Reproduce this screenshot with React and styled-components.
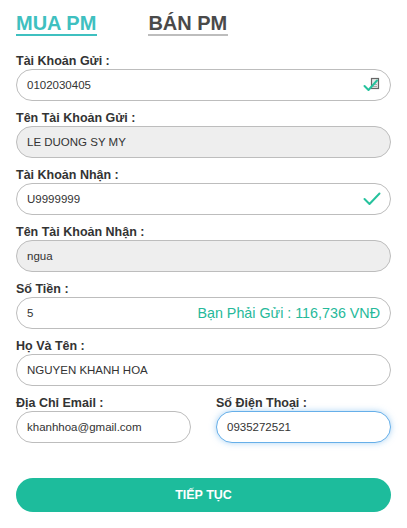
import React from 'react';
import styled, { createGlobalStyle } from 'styled-components';

const GlobalStyle = createGlobalStyle`
  body {
    margin: 0;
    background: #fff;
    font-family: "Liberation Sans", Arial, sans-serif;
  }
`;

const Page = styled.div`
  width: 407px;
  box-sizing: border-box;
  padding: 12px 16px 0;
`;

const Tabs = styled.div`
  display: flex;
  gap: 51px;
`;

const Tab = styled.div`
  font-size: 20px;
  line-height: 22px;
  font-weight: bold;
  color: ${({ active }) => (active ? '#3fc0c0' : '#4a4a4a')};
  border-bottom: 2px solid ${({ active }) => (active ? '#3fc0c0' : '#bdbdbd')};
  padding: 0 1px 0 0;
`;

const Form = styled.form`
  margin-top: 18px;
  display: flex;
  flex-direction: column;
  gap: 10px;
`;

const Row = styled.div`
  display: grid;
  grid-template-columns: 1fr 1fr;
  column-gap: 25px;
`;

const Field = styled.div`
  display: flex;
  flex-direction: column;
`;

const Label = styled.label`
  font-size: 12.5px;
  line-height: 15px;
  font-weight: bold;
  color: #333;
`;

const InputWrap = styled.div`
  position: relative;
  height: 32px;
  box-sizing: border-box;
  border: 1px solid ${({ focused }) => (focused ? '#66afe9' : '#bdbdbd')};
  border-radius: 16px;
  background: ${({ readOnly }) => (readOnly ? '#eeeeee' : '#fff')};
  box-shadow: ${({ focused }) => (focused ? '0 0 6px rgba(102, 175, 233, 0.55)' : 'none')};
  display: flex;
  align-items: center;
  padding: 0 10px 0 10px;
`;

const Value = styled.span`
  flex: 1;
  font-size: 11.5px;
  color: #333;
  white-space: nowrap;
`;

const Hint = styled.span`
  font-size: 14.3px;
  color: #26b99a;
  white-space: nowrap;
`;

const Icon = styled.span`
  display: flex;
  align-items: center;
  margin-right: -1px;
`;

const Button = styled.button`
  margin-top: 25px;
  height: 34px;
  border: 0;
  border-radius: 17px;
  background: #1dbc9c;
  color: #fff;
  font-family: "Liberation Sans", Arial, sans-serif;
  font-size: 12.5px;
  font-weight: bold;
  cursor: pointer;
`;

const CheckDoc = () => (
  <svg width="18" height="16" viewBox="0 0 18 16">
    <rect x="8.5" y="1.5" width="7" height="10" fill="#e8e8e8" stroke="#666" strokeWidth="1.2" />
    <path d="M10 7.5h4M10 9.5h4" stroke="#999" strokeWidth="0.8" />
    <path d="M1.5 9 L5.5 13 L14 3.5" fill="none" stroke="#26c29d" strokeWidth="2" strokeLinecap="round" strokeLinejoin="round" />
  </svg>
);

const Check = () => (
  <svg width="18" height="14" viewBox="0 0 18 14">
    <path d="M1.5 7 L6.5 12 L16.5 1.5" fill="none" stroke="#26c29d" strokeWidth="2" strokeLinecap="round" strokeLinejoin="round" />
  </svg>
);

const App = () => {
  return (
    <Page>
      <GlobalStyle />
      <Tabs>
        <Tab active>MUA PM</Tab>
        <Tab>BÁN PM</Tab>
      </Tabs>
      <Form onSubmit={(e) => e.preventDefault()}>
        <Field>
          <Label>Tài Khoản Gửi :</Label>
          <InputWrap>
            <Value>0102030405</Value>
            <Icon><CheckDoc /></Icon>
          </InputWrap>
        </Field>
        <Field>
          <Label>Tên Tài Khoản Gửi :</Label>
          <InputWrap readOnly>
            <Value>LE DUONG SY MY</Value>
          </InputWrap>
        </Field>
        <Field>
          <Label>Tài Khoản Nhận :</Label>
          <InputWrap>
            <Value>U9999999</Value>
            <Icon><Check /></Icon>
          </InputWrap>
        </Field>
        <Field>
          <Label>Tên Tài Khoản Nhận :</Label>
          <InputWrap readOnly>
            <Value>ngua</Value>
          </InputWrap>
        </Field>
        <Field>
          <Label>Số Tiền :</Label>
          <InputWrap>
            <Value>5</Value>
            <Hint>Bạn Phải Gửi : 116,736 VNĐ</Hint>
          </InputWrap>
        </Field>
        <Field>
          <Label>Họ Và Tên :</Label>
          <InputWrap>
            <Value>NGUYEN KHANH HOA</Value>
          </InputWrap>
        </Field>
        <Row>
          <Field>
            <Label>Địa Chỉ Email :</Label>
            <InputWrap>
              <Value>khanhhoa@gmail.com</Value>
            </InputWrap>
          </Field>
          <Field>
            <Label>Số Điện Thoại :</Label>
            <InputWrap focused>
              <Value>0935272521</Value>
            </InputWrap>
          </Field>
        </Row>
        <Button type="submit">TIẾP TỤC</Button>
      </Form>
    </Page>
  );
};

export default App;
